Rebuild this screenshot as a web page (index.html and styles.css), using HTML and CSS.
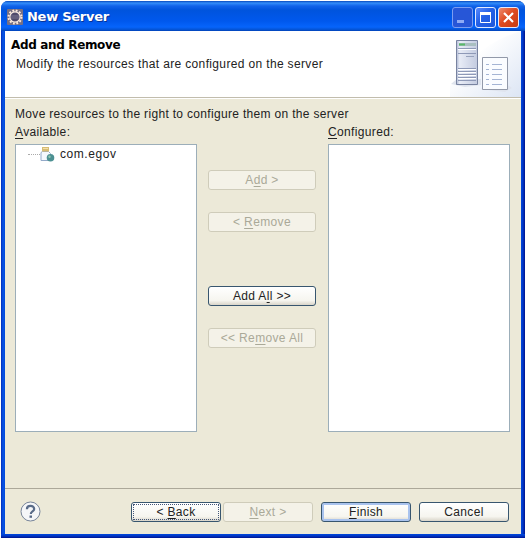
FILE: index.html
```html
<!DOCTYPE html>
<html lang="en">
<head>
<meta charset="utf-8">
<title>New Server</title>
<link rel="stylesheet" href="styles.css">
</head>
<body>
<main class="window">
  <header class="titlebar">
    <svg class="app-icon" width="16" height="16" viewBox="0 0 16 16"><rect width="16" height="16" rx="1" fill="#777084"/><circle cx="8" cy="8" r="6.5" fill="none" stroke="#ffe9d9" stroke-width="2" stroke-dasharray="1.8 1.6"/><circle cx="8" cy="8" r="5.1" fill="#514a6b" stroke="#fff1e7" stroke-width="1.1"/><path d="M4 7h8M4 9h8" stroke="#85809b" stroke-width=".8"/></svg>
    <h1 class="title">New Server</h1>
    <div class="controls">
      <span class="control minimize"><svg width="18" height="19"><path d="M4 13.5h7" stroke="#8eabf5" stroke-width="3"/></svg></span>
      <span class="control"><svg width="19" height="19"><path d="M4.5 5v9.5h10V5" fill="none" stroke="#fff"/><path d="M4 5.5h11" stroke="#fff" stroke-width="3"/></svg></span>
      <span class="control close"><svg width="19" height="19"><path d="M5 5l9 9M14 5l-9 9" stroke="#fff" stroke-width="2.2"/></svg></span>
    </div>
  </header>
  <div class="client">
    <section class="banner">
      <div class="banner-text">
        <h2 class="heading">Add and Remove</h2>
        <p class="description">Modify the resources that are configured on the server</p>
      </div>
      <svg class="banner-art" width="76" height="66" viewBox="0 0 76 66">
        <defs><linearGradient id="sky" x1="0" y1="0" x2="1" y2="1"><stop offset=".35" stop-color="#fff"/><stop offset="1" stop-color="#dce5f4"/></linearGradient><linearGradient id="tower"><stop stop-color="#aeb8d2"/><stop offset=".15" stop-color="#e8ecf6"/><stop offset="1" stop-color="#c3cbe0"/></linearGradient></defs>
        <path d="M76 0Q30 14 5 55v11h71z" fill="url(#sky)"/>
        <path d="M6 53l6-5h24v6l-16 2zM35 58l26-5 6 4-7 4z" fill="#dfe4ee"/>
        <path d="M11.5 9.5h21v44h-21z" fill="url(#tower)" stroke="#7883a0"/>
        <path d="M14 12h17v3H14z" fill="#a9bfc0"/><path d="M14 13.5h6" stroke="#59b969" stroke-width="2"/>
        <path d="M13 17.5h18M13 22.5h18M13 37.5h18M13 40.5h18M13 43.5h18M13 46.5h18M13 49.5h18" stroke="#8e99b7"/><path d="M13 18.5h18M13 38.5h18M13 41.5h18M13 44.5h18M13 47.5h18" stroke="#fff"/><path d="M21 25.5h8" stroke="#98a3bd"/>
        <path d="M37.5 26.5h25v32h-25z" fill="#fafcff" stroke="#9299a9"/>
        <path d="M41 33.5h3M47 33.5h10M41 38.5h3M47 38.5h10M41 43.5h3M47 43.5h10M41 48.5h3M47 48.5h10M41 53.5h3M47 53.5h10" stroke="#a4b4d4"/>
      </svg>
    </section>
    <section class="content">
      <p class="instruction">Move resources to the right to configure them on the server</p>
      <div class="picker">
        <div class="column">
          <label class="label available"><u>A</u>vailable:</label>
          <div class="list">
            <div class="item">
              <span class="branch"></span>
              <svg width="15" height="15" viewBox="0 0 15 15"><path d="M1 5.5l1.5-1h6l2 2v7H1z" fill="#f4f8fd" stroke="#94aac9"/><path d="M2 0h7v4.5H2z" fill="#d7bc73"/><path d="M3 1.5h5" stroke="#f4dfaa"/><circle cx="10.5" cy="10.8" r="3.8" fill="#4c9092"/><circle cx="9.5" cy="9.8" r="1.2" fill="#91c8b0"/></svg>
              <span class="item-name">com.egov</span>
            </div>
          </div>
        </div>
        <div class="actions">
          <button class="button disabled add">A<u>d</u>d &gt;</button>
          <button class="button disabled remove">&lt; <u>R</u>emove</button>
          <button class="button add-all">Add A<u>l</u>l &gt;&gt;</button>
          <button class="button disabled remove-all">&lt;&lt; Re<u>m</u>ove All</button>
        </div>
        <div class="column">
          <label class="label configured"><u>C</u>onfigured:</label>
          <div class="list"></div>
        </div>
      </div>
    </section>
    <footer class="footer">
      <svg class="help" width="21" height="21" viewBox="0 0 21 21"><circle cx="10.5" cy="10.5" r="9.5" fill="#f5f6f8" stroke="#77849a"/><path d="M6.9 8.2C6.9 3.8 14.2 4 14.2 8c0 2.5-3.4 2.4-3.4 5" fill="none" stroke="#596b88" stroke-width="2.2"/><path d="M9.5 14.5H12v2.3H9.5z" fill="#596b88"/></svg>
      <div class="navigation">
        <button class="button focused back">&lt; <u>B</u>ack</button>
        <button class="button disabled next"><u>N</u>ext &gt;</button>
      </div>
      <button class="button default finish"><u>F</u>inish</button>
      <button class="button cancel">Cancel</button>
    </footer>
  </div>
</main>
</body>
</html>
```
FILE: styles.css
```css
* { box-sizing: border-box; }
body { margin: 0; background: #fff; color: #222; font: 12px/16px "Liberation Sans", sans-serif; overflow: hidden; }
h1, h2, p { margin: 0; }
u { text-decoration: underline; text-underline-offset: 2px; text-decoration-thickness: 1px; text-decoration-skip-ink: none; }
.window { width: 524px; height: 537px; margin: 1px; display: flex; flex-direction: column; border-radius: 7px 7px 0 0; overflow: hidden; background: linear-gradient(#0000 533px, #0048dc 533px, #0035c5 535px, #00138c), linear-gradient(90deg, #002bb9, #0855e5 2px, #0048dc 4px, #0048dc 520px, #0035c5 522px, #00138c); }
.titlebar { height: 30px; flex: none; display: flex; align-items: center; padding: 1px 6px 0 6px; background: linear-gradient(#0648bc, #348efa 2px, #1163e9 5px, #0054dd 9px, #0058ed 20px, #0664fb 26px, #0451cf 29px, #0040b4); }
.app-icon { flex: none; }
.title { margin-left: 4px; color: #fff; font: bold 13px/18px "DejaVu Sans", sans-serif; letter-spacing: -.26px; text-shadow: 1px 1px #073397; }
.controls { display: flex; gap: 2px; margin: 2px 0 0 auto; }
.control { width: 21px; height: 21px; border: 1px solid #e1eaff; border-radius: 3px; background: linear-gradient(135deg, #5a8bff, #2460e6 45%, #1d57dc); }
.control svg { display: block; }
.minimize { border-color: #7b9df1; background: #2756d7; }
.close { background: linear-gradient(135deg, #ee8b6e, #df4b21 45%, #c83c12); }
.client { flex: 1; margin: 0 4px 4px; display: flex; flex-direction: column; background: #ece9d8; }
.banner { height: 67px; display: flex; justify-content: space-between; background: #fff; border-bottom: 1px solid #c2bdad; }
.banner-text { padding: 6px 0 0 6px; }
.heading { color: #000; font: bold 12px/16px "DejaVu Sans", sans-serif; letter-spacing: -.35px; }
.description { padding: 3px 0 0 5px; letter-spacing: .35px; }
.banner-art { width: 76px; height: 66px; }
.content { height: 390px; padding: 7px 11px 0 10px; border-top: 1px solid #fff; }
.instruction { height: 18px; letter-spacing: .32px; }
.picker { display: flex; gap: 12px; }
.column { width: 182px; }
.label { display: block; height: 20px; letter-spacing: .35px; }
.list { height: 288px; border: 1px solid #9caeb9; background: #fff; }
.item { display: flex; align-items: center; height: 18px; padding-left: 12px; }
.branch { width: 12px; border-top: 1px dotted #aaa; }
.item-name { margin-left: 5px; letter-spacing: .55px; }
.actions { width: 108px; padding-top: 46px; display: flex; flex-direction: column; margin-left: -1px; }
.button { display: block; width: 90px; height: 20px; padding: 0; color: #222; font: 12px/17px "Liberation Sans", sans-serif; letter-spacing: .35px; border: 1px solid #38566f; border-radius: 3px; background: linear-gradient(#fff, #f6f5ef 75%, #d9d5c9); }
.actions .button { width: 108px; margin-bottom: 22px; }
.actions .remove { margin-bottom: 54px; }
.disabled { color: #aaa998; border-color: #cfccba; background: #f4f2e8; }
.footer { flex: 1; display: flex; align-items: flex-start; padding: 13px 12px 0 15px; border-top: 1px solid #aca899; }
.help { margin-top: -1px; }
.navigation { display: flex; gap: 2px; margin: 0 8px 0 auto; }
.finish { margin-right: 8px; }
.default { box-shadow: inset 0 0 0 2px #a9c3ee; }
.focused { position: relative; }
.focused::after { content: ""; position: absolute; inset: 1px; border: 1px dotted #465879; }
```
